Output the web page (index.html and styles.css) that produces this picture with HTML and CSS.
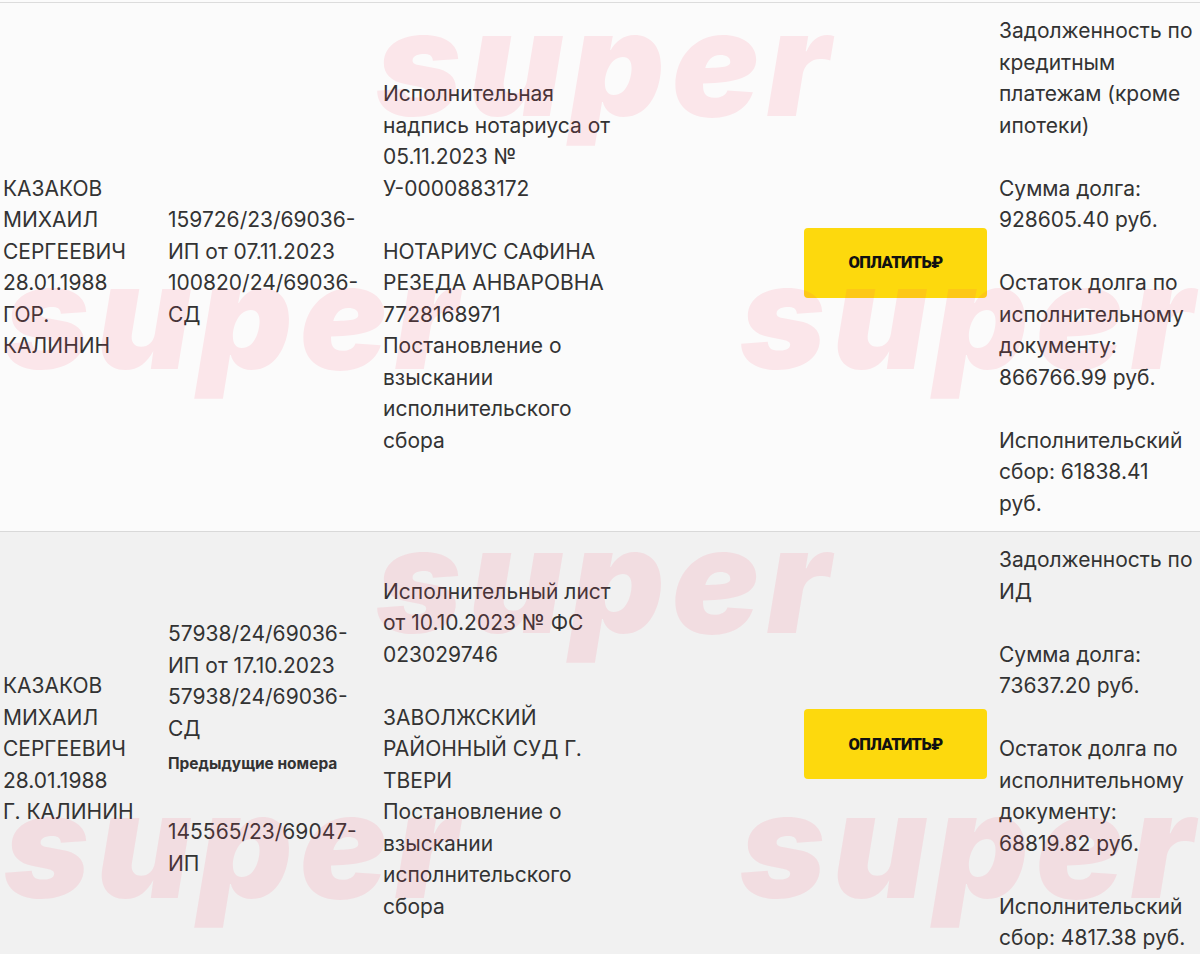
FILE: index.html
```html
<!DOCTYPE html>
<html lang="ru">
<head>
  <meta charset="UTF-8">
  <title>Задолженности</title>
  <link rel="stylesheet" href="styles.css">
</head>
<body>
<div class="page">
  <div class="debts">

    <!-- первая запись -->
    <div class="debt-row">
      <div class="cell cell-name">
        <div>КАЗАКОВ МИХАИЛ СЕРГЕЕВИЧ</div>
        <div>28.01.1988</div>
        <div>ГОР. КАЛИНИН</div>
      </div>
      <div class="cell cell-number">159726/23/69036-ИП от 07.11.2023 100820/24/69036-СД</div>
      <div class="cell cell-doc">
        <p>Исполнительная надпись нотариуса от 05.11.2023 № У-0000883172</p>
        <p class="gap">НОТАРИУС САФИНА РЕЗЕДА АНВАРОВНА 7728168971</p>
        <p>Постановление о взыскании исполнительского сбора</p>
      </div>
      <div class="cell cell-pay">
        <button class="pay-btn">ОПЛАТИТЬ₽</button>
      </div>
      <div class="cell cell-sum">
        <p>Задолженность по кредитным платежам (кроме ипотеки)</p>
        <p class="gap">Сумма долга: 928605.40 руб.</p>
        <p class="gap">Остаток долга по исполнительному документу: 866766.99 руб.</p>
        <p class="gap">Исполнительский сбор: 61838.41 руб.</p>
      </div>
    </div>

    <!-- вторая запись -->
    <div class="debt-row alt">
      <div class="cell cell-name">
        <div>КАЗАКОВ МИХАИЛ СЕРГЕЕВИЧ</div>
        <div>28.01.1988</div>
        <div>Г. КАЛИНИН</div>
      </div>
      <div class="cell cell-number">
        <div>57938/24/69036-ИП от 17.10.2023 57938/24/69036-СД</div>
        <div class="prev-label">Предыдущие номера</div>
        <div class="prev-number">145565/23/69047-ИП</div>
      </div>
      <div class="cell cell-doc">
        <p>Исполнительный лист от 10.10.2023 № ФС 023029746</p>
        <p class="gap">ЗАВОЛЖСКИЙ РАЙОННЫЙ СУД Г. ТВЕРИ</p>
        <p>Постановление о взыскании исполнительского сбора</p>
      </div>
      <div class="cell cell-pay">
        <button class="pay-btn">ОПЛАТИТЬ₽</button>
      </div>
      <div class="cell cell-sum">
        <p>Задолженность по ИД</p>
        <p class="gap">Сумма долга: 73637.20 руб.</p>
        <p class="gap">Остаток долга по исполнительному документу: 68819.82 руб.</p>
        <p class="gap">Исполнительский сбор: 4817.38 руб.</p>
      </div>
    </div>

  </div>

  <!-- водяной знак поверх скриншота -->
  <div class="watermark" aria-hidden="true">
    <span class="wm wm-1">super</span>
    <span class="wm wm-2">super</span>
    <span class="wm wm-3">super</span>
    <span class="wm wm-4">super</span>
    <span class="wm wm-5">super</span>
    <span class="wm wm-6">super</span>
  </div>
</div>
</body>
</html>
```

FILE: styles.css
```css
body {
  margin: 0;
  font-family: Inter, 'Noto Sans', sans-serif;
  color: #333;
  background: #fbfbfb;
  overflow: hidden;
}

.page {
  position: relative;
  height: 954px;
  overflow: hidden;
  padding-top: 2px;
}

.debts {
  border-top: 1px solid #dcdcdc;
}

.debt-row {
  display: grid;
  grid-template-columns: 165px 215px 421px 195px 204px;
  align-items: center;
  background: #fbfbfb;
  border-bottom: 1px solid #d9d9d9;
}

.debt-row.alt {
  background: #f1f1f1;
}

.cell {
  padding: 12px 3px;
  font-size: 21px;
  line-height: 31.5px;
}

.cell p {
  margin: 0;
}

.cell p.gap {
  margin-top: 31.5px;
}

.cell-name {
  max-width: 140px;
}

.cell-number {
  max-width: 200px;
}

.cell-doc {
  max-width: 245px;
}

.cell-sum {
  max-width: 195px;
}

.prev-label {
  margin: 8px 0 40px;
  font-size: 15.5px;
  font-weight: 700;
  line-height: 24px;
}

.pay-btn {
  display: block;
  width: 183px;
  height: 70px;
  border: none;
  border-radius: 4px;
  background: #fdd90d;
  color: #111;
  font-family: Roboto, 'DejaVu Sans', sans-serif;
  font-size: 16.5px;
  font-weight: 900;
  letter-spacing: -0.6px;
  margin-top: -9px;
  cursor: pointer;
}

.watermark {
  position: absolute;
  inset: 0;
  pointer-events: none;
}

.wm {
  position: absolute;
  font-family: Inter, 'DejaVu Sans', sans-serif;
  font-weight: 900;
  font-style: italic;
  font-size: 146px;
  line-height: 1;
  letter-spacing: 7px;
  color: rgba(255, 60, 100, 0.11);
  white-space: nowrap;
}

.wm-1 { left: 376px; top: -10px; }
.wm-2 { left: 4px; top: 243px; }
.wm-3 { left: 740px; top: 243px; }
.wm-4 { left: 376px; top: 507px; }
.wm-5 { left: 4px; top: 772px; }
.wm-6 { left: 740px; top: 772px; }
```
